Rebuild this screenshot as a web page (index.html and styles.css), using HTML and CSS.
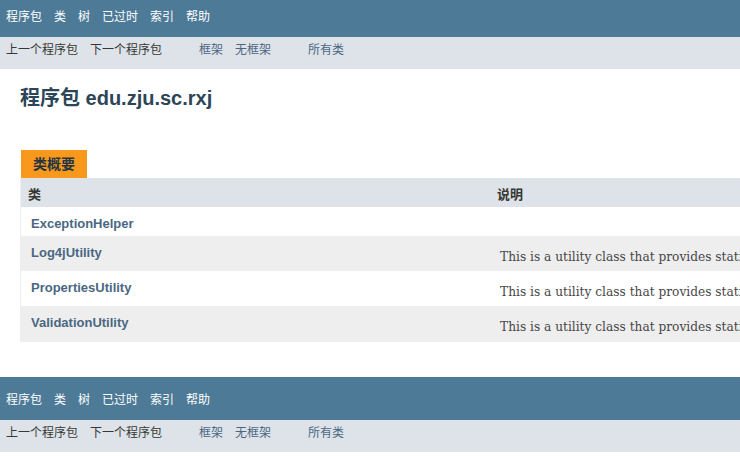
FILE: index.html
```html
<!DOCTYPE html>
<html lang="zh-CN">
<head>
<meta charset="utf-8">
<title>edu.zju.sc.rxj</title>
<link rel="stylesheet" href="styles.css">
</head>
<body>
<div class="topNav topNav-scrolled">
  <ul class="navList">
    <li><a href="#">程序包</a></li>
    <li><a href="#">类</a></li>
    <li><a href="#">树</a></li>
    <li><a href="#">已过时</a></li>
    <li><a href="#">索引</a></li>
    <li><a href="#">帮助</a></li>
  </ul>
</div>
<div class="subNav">
  <ul class="navList">
    <li>上一个程序包</li>
    <li>下一个程序包</li>
  </ul>
  <ul class="navList">
    <li><a href="#">框架</a></li>
    <li><a href="#">无框架</a></li>
  </ul>
  <ul class="navList">
    <li><a href="#">所有类</a></li>
  </ul>
</div>
<div class="header">
  <h1 class="title">程序包 edu.zju.sc.rxj</h1>
</div>
<div class="contentContainer">
  <table class="typeSummary">
    <caption><span>类概要</span></caption>
    <colgroup><col class="col-first"><col class="col-last"></colgroup>
    <thead>
      <tr><th class="colFirst">类</th><th class="colLast">说明</th></tr>
    </thead>
    <tbody>
      <tr class="altColor short">
        <td class="colFirst"><a href="#">ExceptionHelper</a></td>
        <td class="colLast"></td>
      </tr>
      <tr class="rowColor">
        <td class="colFirst"><a href="#">Log4jUtility</a></td>
        <td class="colLast"><div class="block">This is a utility class that provides static methods for logging with Log4j.</div></td>
      </tr>
      <tr class="altColor">
        <td class="colFirst"><a href="#">PropertiesUtility</a></td>
        <td class="colLast"><div class="block">This is a utility class that provides static methods for reading properties.</div></td>
      </tr>
      <tr class="rowColor">
        <td class="colFirst"><a href="#">ValidationUtility</a></td>
        <td class="colLast"><div class="block">This is a utility class that provides static methods for validating arguments.</div></td>
      </tr>
    </tbody>
  </table>
</div>
<div class="topNav">
  <ul class="navList">
    <li><a href="#">程序包</a></li>
    <li><a href="#">类</a></li>
    <li><a href="#">树</a></li>
    <li><a href="#">已过时</a></li>
    <li><a href="#">索引</a></li>
    <li><a href="#">帮助</a></li>
  </ul>
</div>
<div class="subNav">
  <ul class="navList">
    <li>上一个程序包</li>
    <li>下一个程序包</li>
  </ul>
  <ul class="navList">
    <li><a href="#">框架</a></li>
    <li><a href="#">无框架</a></li>
  </ul>
  <ul class="navList">
    <li><a href="#">所有类</a></li>
  </ul>
</div>
</body>
</html>
```

FILE: styles.css
```css
html, body {
  overflow: hidden;
}
body {
  margin: 0;
  background: #ffffff;
  color: #353833;
  font-family: "Liberation Sans", "Noto Sans CJK SC", sans-serif;
  font-size: 14px;
}
a {
  text-decoration: none;
  color: #4A6782;
}

.topNav {
  background: #4D7A97;
  height: 43px;
  box-sizing: border-box;
  padding-top: 10px;
  font-size: 12px;
  overflow: hidden;
}
.topNav-scrolled {
  height: 37px;
  padding-top: 4px;
}
.topNav a {
  color: #ffffff;
}

.navList {
  display: flex;
  margin: 0 25px 0 0;
  padding: 0;
  list-style: none;
}
.navList li {
  padding: 5px 6px;
  line-height: 17px;
  white-space: nowrap;
}

.subNav {
  display: flex;
  background: #dee3e9;
  height: 32px;
  font-size: 12px;
  overflow: hidden;
}

.header {
  margin: 0 20px;
  padding-top: 5px;
}
.title {
  margin: 10px 0;
  font-size: 20px;
  line-height: 28px;
  font-weight: bold;
  color: #2c4557;
}

.contentContainer {
  padding: 28px 20px 35px;
}

.typeSummary {
  width: 1000px;
  table-layout: fixed;
  border-collapse: separate;
  border-spacing: 0;
  border-left: 1px solid #EEE;
  border-right: 1px solid #EEE;
  border-bottom: 1px solid #EEE;
}
.col-first {
  width: 469px;
}
.typeSummary caption {
  text-align: left;
  padding: 0 0 0 1px;
  margin: 0;
  overflow: hidden;
}
.typeSummary caption span {
  float: left;
  background: #F8981D;
  color: #253441;
  font-weight: bold;
  font-size: 14px;
  line-height: 16px;
  padding: 6px 12px 6px 12px;
}

.typeSummary th {
  background: #dee3e9;
  text-align: left;
  vertical-align: top;
  font-size: 13px;
  font-weight: bold;
  line-height: 18px;
  padding: 8px 3px 3px 7px;
  white-space: nowrap;
}

.typeSummary td {
  text-align: left;
  vertical-align: top;
  padding: 7px 0 2px 10px;
  font-size: 13px;
  line-height: 20px;
}
.typeSummary td.colFirst a {
  font-weight: bold;
}
.altColor {
  background: #FFFFFF;
}
.rowColor {
  background: #EEEEEF;
}

.block {
  margin: 4px 10px 2px 0;
  font-family: "DejaVu Serif", "Liberation Serif", serif;
  font-size: 12.2px;
  line-height: 20px;
  color: #474747;
  white-space: nowrap;
}
```
